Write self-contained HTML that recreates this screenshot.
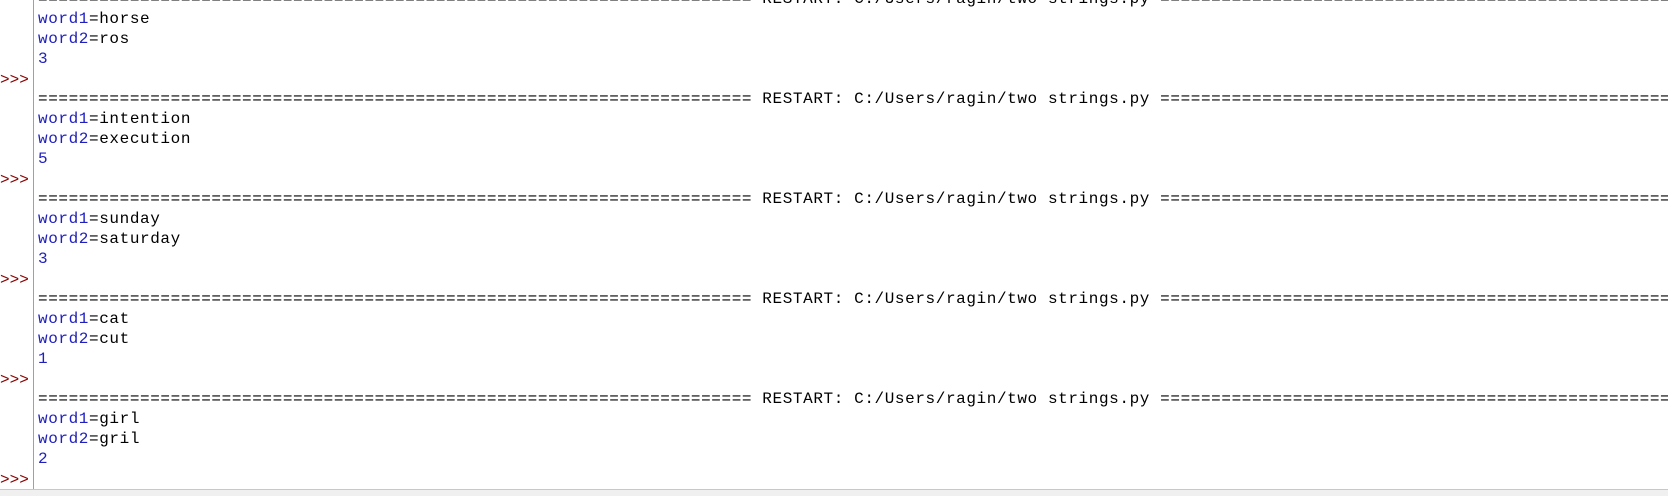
<!DOCTYPE html>
<html><head><style>
body{margin:0;width:1668px;height:495px;overflow:hidden;background:#fff;position:relative;font-family:"Liberation Mono",monospace;font-size:16px}
#g{position:absolute;left:33px;top:0;width:1px;height:489px;background:#a0a0a0}
#bot{position:absolute;left:0;top:489px;width:1668px;height:6px;background:#f0f0f0;border-top:1px solid #c8c8c8}
.l{position:absolute;left:38px;right:0;overflow:hidden;height:20px;line-height:20px;white-space:pre;color:#000;letter-spacing:0.6px}
.p{position:absolute;left:0;height:20px;line-height:20px;color:#8b0000;white-space:pre}
.b{color:#2020c0}
</style></head><body>
<div id="g"></div><div id="bot"></div>
<div class="l" style="top:-11px">====================================================================== RESTART: C:/Users/ragin/two strings.py ======================================================================</div>
<div class="l" style="top:9px"><span class="b">word1</span>=horse</div>
<div class="l" style="top:29px"><span class="b">word2</span>=ros</div>
<div class="l b" style="top:49px">3</div>
<div class="p" style="top:70px">&gt;&gt;&gt;</div>
<div class="l" style="top:89px">====================================================================== RESTART: C:/Users/ragin/two strings.py ======================================================================</div>
<div class="l" style="top:109px"><span class="b">word1</span>=intention</div>
<div class="l" style="top:129px"><span class="b">word2</span>=execution</div>
<div class="l b" style="top:149px">5</div>
<div class="p" style="top:170px">&gt;&gt;&gt;</div>
<div class="l" style="top:189px">====================================================================== RESTART: C:/Users/ragin/two strings.py ======================================================================</div>
<div class="l" style="top:209px"><span class="b">word1</span>=sunday</div>
<div class="l" style="top:229px"><span class="b">word2</span>=saturday</div>
<div class="l b" style="top:249px">3</div>
<div class="p" style="top:270px">&gt;&gt;&gt;</div>
<div class="l" style="top:289px">====================================================================== RESTART: C:/Users/ragin/two strings.py ======================================================================</div>
<div class="l" style="top:309px"><span class="b">word1</span>=cat</div>
<div class="l" style="top:329px"><span class="b">word2</span>=cut</div>
<div class="l b" style="top:349px">1</div>
<div class="p" style="top:370px">&gt;&gt;&gt;</div>
<div class="l" style="top:389px">====================================================================== RESTART: C:/Users/ragin/two strings.py ======================================================================</div>
<div class="l" style="top:409px"><span class="b">word1</span>=girl</div>
<div class="l" style="top:429px"><span class="b">word2</span>=gril</div>
<div class="l b" style="top:449px">2</div>
<div class="p" style="top:470px">&gt;&gt;&gt;</div>
</body></html>
